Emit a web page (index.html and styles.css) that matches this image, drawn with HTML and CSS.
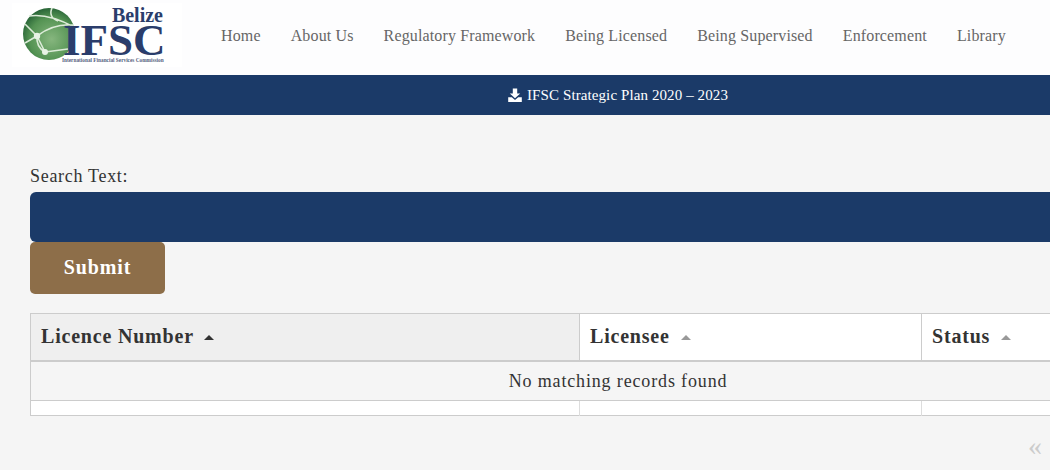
FILE: index.html
```html
<!DOCTYPE html>
<html lang="en">
<head>
    <meta charset="UTF-8">
    <title>IFSC Belize</title>
    <link rel="stylesheet" href="styles.css">
</head>
<body>

<header class="site-header">
    <a class="logo">
        <svg width="170" height="64" viewBox="0 0 170 64">
            <defs>
                <radialGradient id="globe" cx="0.55" cy="0.6" r="0.6">
                    <stop offset="0" stop-color="#86b67e"/>
                    <stop offset="0.7" stop-color="#549353"/>
                    <stop offset="1" stop-color="#2a6638"/>
                </radialGradient>
            </defs>
            <circle cx="37" cy="31" r="26" fill="url(#globe)"/>
            <g fill="none" stroke="#dcebd8" stroke-width="1.600">
                <path d="M13 21 L25 33 M25 33 Q42 20 62 22 M25 33 L33 49 M13 40 L25 33 M33 49 L56 46 M17 13 Q36 10 62 24 M40 5 Q36 14 46 18 M25 33 Q24 44 33 49"/>
            </g>
            <g fill="#e8f3e5">
                <circle cx="25" cy="33" r="3.200"/>
                <circle cx="33" cy="49" r="3"/>
            </g>
            <text class="logo-belize" x="151" y="19" text-anchor="end">Belize</text>
            <text class="logo-ifsc" x="51" y="52">IFSC</text>
            <text class="logo-small" x="50" y="58.500">International Financial Services Commission</text>
        </svg>
    </a>
    <nav class="main-nav">
        <a>Home</a>
        <a>About Us</a>
        <a>Regulatory Framework</a>
        <a>Being Licensed</a>
        <a>Being Supervised</a>
        <a>Enforcement</a>
        <a>Library</a>
    </nav>
</header>

<div class="notice-bar">
    <svg class="download-icon" width="14" height="14" viewBox="0 0 14 14">
        <path d="M4.800 0.500h4.400v5h3L7 10.200 1.800 5.500h3z" fill="#fff"/>
        <path d="M0.200 9.200h3.600L7 12l3.200-2.800h3.600V14H0.200z" fill="#fff"/>
    </svg>
    <span>IFSC Strategic Plan 2020 – 2023</span>
</div>

<main class="content">
    <label class="search-label" for="searchText">Search Text:</label>
    <input class="search-input" id="searchText" type="text">
    <button class="submit-btn">Submit</button>

    <table class="results">
        <thead>
            <tr>
                <th class="col-number sorted">Licence Number <i class="sort-arrow"></i></th>
                <th class="col-name">Licensee <i class="sort-arrow"></i></th>
                <th class="col-status">Status <i class="sort-arrow"></i></th>
            </tr>
        </thead>
        <tbody>
            <tr class="empty-row">
                <td colspan="3">No matching records found</td>
            </tr>
            <tr class="foot-row">
                <td></td>
                <td></td>
                <td></td>
            </tr>
        </tbody>
    </table>

    <div class="pager">«</div>
</main>

</body>
</html>
```

FILE: styles.css
```css
* {
    box-sizing: border-box;
    margin: 0;
    padding: 0;
}

html, body {
    height: 470px;
    overflow: hidden;
}

body {
    width: 1050px;
    font-family: "Liberation Serif", serif;
    background-color: #f5f5f5;
    color: #333;
}

.site-header {
    height: 75px;
    background-color: #fdfdfe;
    display: flex;
    padding: 3px 0 0 12px;
}

.logo {
    display: block;
    width: 170px;
    height: 64px;
    background-color: #fff;
}

.logo-belize {
    font: bold 20px "Liberation Serif", serif;
    fill: #2b3d6b;
}

.logo-ifsc {
    font: bold 45px "Liberation Serif", serif;
    fill: #2b3d6b;
}

.logo-small {
    font: bold 5.300px "Liberation Serif", serif;
    fill: #55617f;
}

.main-nav {
    display: flex;
    gap: 30px;
    margin-left: 39px;
    padding-top: 23px;
    font-size: 16px;
    line-height: 19px;
    letter-spacing: 0.14px;
    color: #666;
}

.notice-bar {
    height: 40px;
    background-color: #1b3a68;
    color: #fff;
    font-size: 15px;
    letter-spacing: 0.1px;
    display: flex;
    align-items: center;
    gap: 5px;
    padding-left: 508px;
}

.notice-bar span {
    padding-top: 1px;
}

.content {
    padding: 50px 0 0 30px;
}

.search-label {
    display: block;
    height: 27px;
    font-size: 18px;
    line-height: 22px;
    letter-spacing: 0.7px;
}

.search-input {
    display: block;
    width: 1176px;
    height: 50px;
    background-color: #1b3a68;
    border: none;
    border-radius: 6px;
}

.submit-btn {
    display: block;
    width: 135px;
    height: 52px;
    padding-bottom: 2px;
    background-color: #8d6e49;
    color: #fff;
    border: none;
    border-radius: 5px;
    font-family: "Liberation Serif", serif;
    font-size: 20px;
    font-weight: bold;
    letter-spacing: 0.9px;
}

.results {
    width: 1176px;
    margin-top: 19px;
    border-collapse: collapse;
    table-layout: fixed;
    border: 1px solid #ccc;
    background-color: #fff;
}

.results th {
    height: 47px;
    padding-left: 10px;
    text-align: left;
    font-size: 20px;
    letter-spacing: 0.8px;
    border-bottom: 2px solid #ccc;
    border-right: 1px solid #ccc;
}

.col-number {
    width: 549px;
}

.col-name {
    width: 342px;
}

.results th.sorted {
    background-color: #efefef;
}

.sort-arrow {
    display: inline-block;
    margin-left: 5px;
    vertical-align: 3px;
    border-left: 5.500px solid transparent;
    border-right: 5.500px solid transparent;
    border-bottom: 5px solid #999;
}

.sorted .sort-arrow {
    border-bottom-color: #333;
}

.empty-row td {
    height: 40px;
    padding-top: 2px;
    background-color: #f5f5f5;
    border-bottom: 1px solid #ccc;
    text-align: center;
    font-size: 18px;
    letter-spacing: 0.85px;
}

.foot-row td {
    height: 15px;
    border-right: 1px solid #ddd;
}

.pager {
    margin: 14px 8px 0 0;
    text-align: right;
    font-size: 28px;
    line-height: 32px;
    color: #ccc;
}
```
